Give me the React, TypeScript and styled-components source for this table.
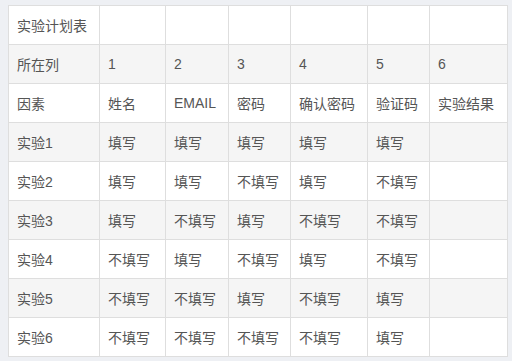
import React from "react";
import styled, { createGlobalStyle } from "styled-components";

const GlobalStyle = createGlobalStyle`
  html, body {
    margin: 0;
    padding: 0;
    background-color: #eef0f4;
  }
`;

const Page = styled.div`
  padding: 5px 5px 5px 8px;
  font-family: "Liberation Sans", Arial, "Noto Sans CJK SC", sans-serif;
`;

const Table = styled.table`
  width: 500px;
  border-collapse: collapse;
  table-layout: fixed;
  background-color: #ffffff;
  font-size: 14px;
  color: #555555;
`;

const Row = styled.tr<{ striped?: boolean }>`
  background-color: ${(props) => (props.striped ? "#f5f5f5" : "#ffffff")};
`;

const Cell = styled.td`
  height: 38px;
  padding: 0 8px;
  border: 1px solid #dedede;
  white-space: nowrap;
  overflow: hidden;
  vertical-align: middle;
  text-align: left;
`;

const widths = [91, 66, 63, 62, 77, 62, 78];

const rows: string[][] = [
  ["实验计划表", "", "", "", "", "", ""],
  ["所在列", "1", "2", "3", "4", "5", "6"],
  ["因素", "姓名", "EMAIL", "密码", "确认密码", "验证码", "实验结果"],
  ["实验1", "填写", "填写", "填写", "填写", "填写", ""],
  ["实验2", "填写", "填写", "不填写", "填写", "不填写", ""],
  ["实验3", "填写", "不填写", "填写", "不填写", "不填写", ""],
  ["实验4", "不填写", "填写", "不填写", "填写", "不填写", ""],
  ["实验5", "不填写", "不填写", "填写", "不填写", "填写", ""],
  ["实验6", "不填写", "不填写", "不填写", "不填写", "填写", ""],
];

const App: React.FunctionComponent = () => (
  <>
    <GlobalStyle />
    <Page>
      <Table>
        <colgroup>
          {widths.map((w, i) => (
            <col key={i} style={{ width: w }} />
          ))}
        </colgroup>
        <tbody>
          {rows.map((r, i) => (
            <Row key={i} striped={i % 2 === 1}>
              {r.map((c, j) => (
                <Cell key={j}>{c}</Cell>
              ))}
            </Row>
          ))}
        </tbody>
      </Table>
    </Page>
  </>
);

export default App;
